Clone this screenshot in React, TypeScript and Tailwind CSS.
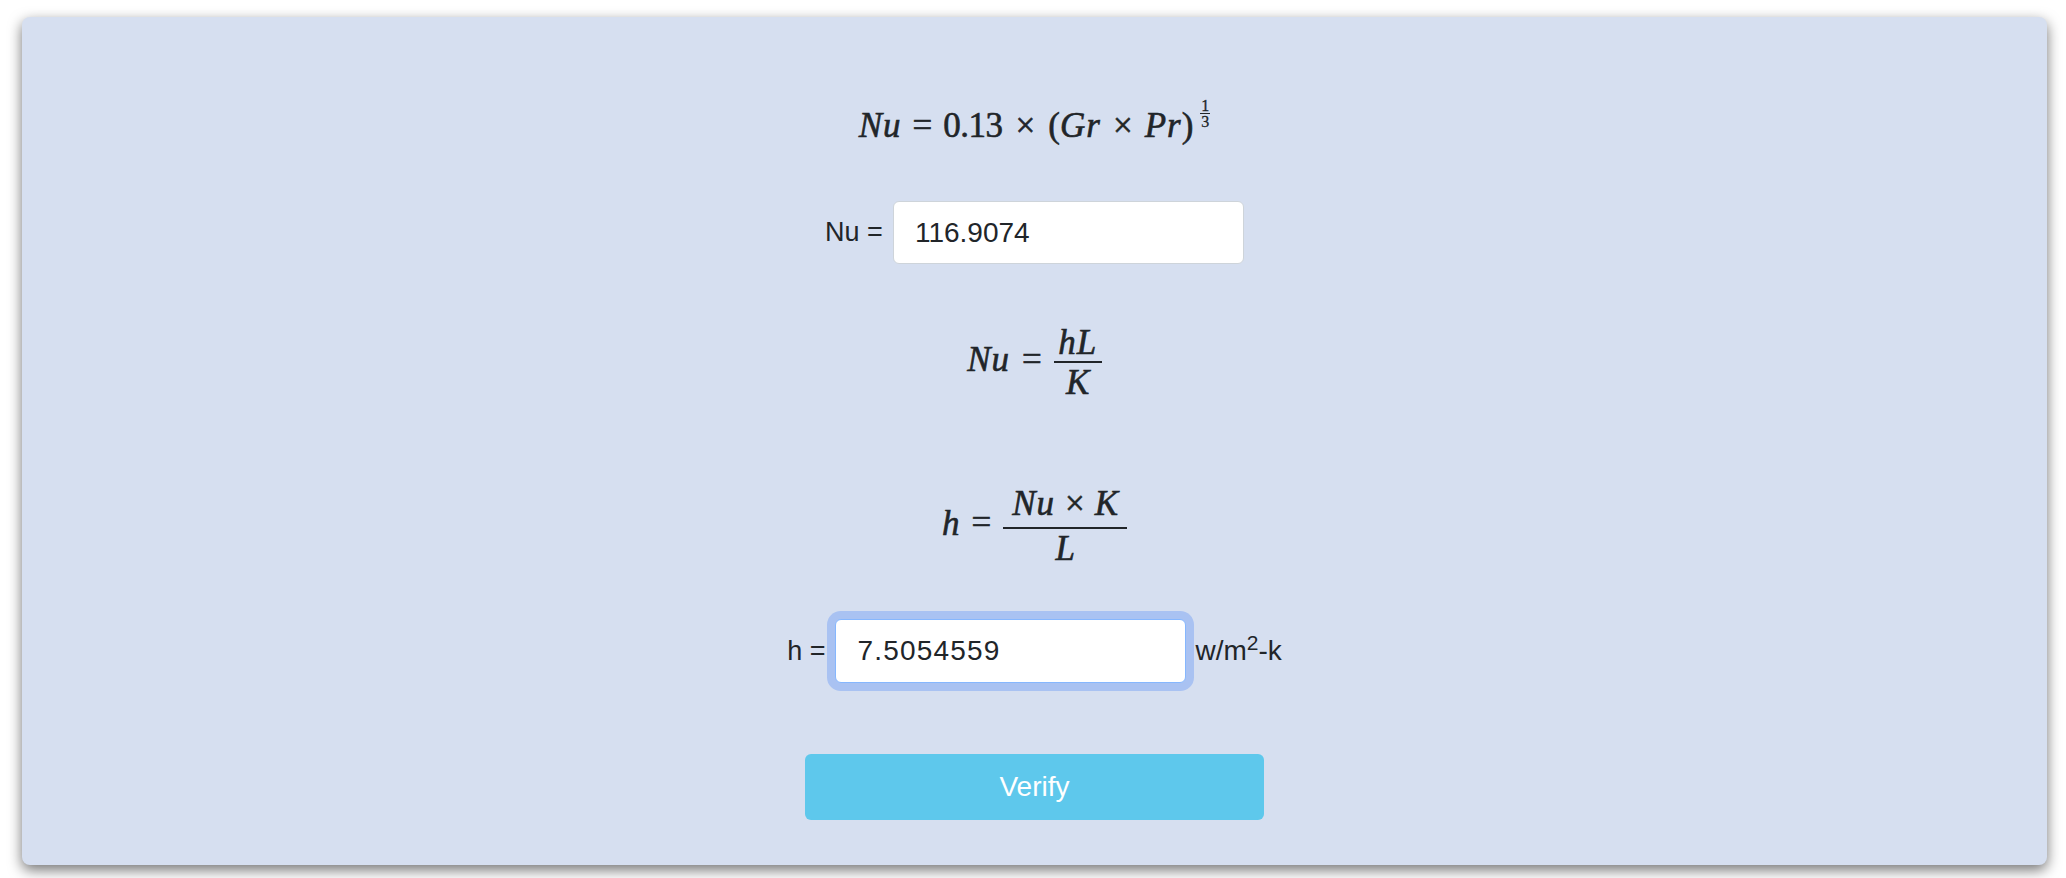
import React from "react";

const MATH =
  "font-['Liberation_Serif',serif] text-[35px] text-[#212529] leading-none whitespace-nowrap [-webkit-text-stroke:0.6px_#212529]";

function Frac({
  top,
  bottom,
  width,
  numClass = "",
}: {
  top: React.ReactNode;
  bottom: React.ReactNode;
  width: string;
  numClass?: string;
}) {
  return (
    <span className={`inline-flex flex-col items-center align-middle ${width}`}>
      <span className={`leading-[36px] ${numClass}`}>{top}</span>
      <span className="h-[2px] w-full bg-[#212529]" />
      <span className="leading-[36px] pt-[2px]">{bottom}</span>
    </span>
  );
}

export default function App() {
  return (
    <div className="min-h-screen bg-white pt-[17px] pl-[22px] font-['Liberation_Sans',Arial,sans-serif]">
      <div className="w-[2025px] h-[848px] rounded-[8px] bg-[#d6dff0] shadow-[0_5px_14px_rgba(0,0,0,0.55)] pt-[79px] flex flex-col items-center">
        {/* Nu = 0.13 x (Gr x Pr)^(1/3) */}
        <div className={`h-[50px] flex items-center ${MATH}`}>
          <span>
            <span className="italic tracking-[1px]">Nu</span>
            <span className="mx-[11px]">=</span>
            <span className="tracking-[-0.5px]">0.13</span>
            <span className="mx-[13px]">×</span>
            <span>(</span>
            <span className="italic tracking-[1px]">Gr</span>
            <span className="mx-[12px]">×</span>
            <span className="italic tracking-[1px]">Pr</span>
            <span>)</span>
            <span className="inline-flex flex-col items-center align-[26px] text-[16px] ml-[7px] [-webkit-text-stroke:0.3px_#212529]">
              <span className="leading-[14px]">1</span>
              <span className="h-[1px] w-[10px] bg-[#212529]" />
              <span className="leading-[15px]">3</span>
            </span>
          </span>
        </div>

        <div className="mt-[55px] flex items-center gap-[10px] text-[27px] text-[#212529]">
          <span>Nu =</span>
          <input
            readOnly
            value="116.9074"
            className="w-[351px] h-[63px] rounded-[6px] border border-[#ced4da] bg-white px-[21px] text-[28px] text-[#212529] outline-none"
          />
        </div>

        {/* Nu = hL / K */}
        <div className={`mt-[55px] h-[88px] flex items-center ${MATH}`}>
          <span>
            <span className="italic tracking-[1px]">Nu</span>
            <span className="mx-[12px]">=</span>
            <Frac
              width="w-[48px]"
              top={<span className="italic tracking-[1px]">hL</span>}
              bottom={<span className="italic">K</span>}
            />
          </span>
        </div>

        {/* h = Nu x K / L */}
        <div className={`mt-[75px] h-[88px] flex items-center ${MATH}`}>
          <span>
            <span className="italic">h</span>
            <span className="mx-[12px]">=</span>
            <Frac
              width="w-[124px]"
              numClass="pb-[5px]"
              top={
                <span>
                  <span className="italic tracking-[1px]">Nu</span>
                  <span className="mx-[10px]">×</span>
                  <span className="italic">K</span>
                </span>
              }
              bottom={<span className="italic">L</span>}
            />
          </span>
        </div>

        <div className="mt-[49px] flex items-center text-[27px] text-[#212529]">
          <span className="mr-[10px]">h =</span>
          <input
            readOnly
            value="7.5054559"
            className="w-[351px] h-[64px] rounded-[6px] border border-[#86b7fe] bg-white px-[21px] text-[28px] tracking-[1.2px] text-[#212529] outline-none shadow-[0_0_0_8px_#a9c2f2]"
          />
          <span className="ml-[9px] text-[28px]">
            w/m<sup>2</sup>-k
          </span>
        </div>

        <button className="mt-[71px] w-[459px] h-[66px] rounded-[6px] bg-[#5ec8ec] text-[28px] text-white">
          Verify
        </button>
      </div>
    </div>
  );
}
